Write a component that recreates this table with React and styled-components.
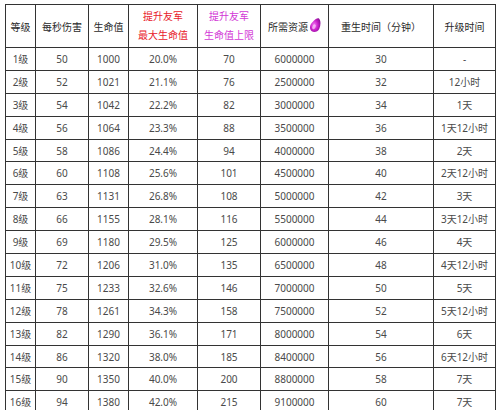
import React from "react";
import styled, { createGlobalStyle } from "styled-components";

const rows = [
  ["1级", 50, 1000, "20.0%", 70, 6000000, 30, "-"],
  ["2级", 52, 1021, "21.1%", 76, 2500000, 32, "12小时"],
  ["3级", 54, 1042, "22.2%", 82, 3000000, 34, "1天"],
  ["4级", 56, 1064, "23.3%", 88, 3500000, 36, "1天12小时"],
  ["5级", 58, 1086, "24.4%", 94, 4000000, 38, "2天"],
  ["6级", 60, 1108, "25.6%", 101, 4500000, 40, "2天12小时"],
  ["7级", 63, 1131, "26.8%", 108, 5000000, 42, "3天"],
  ["8级", 66, 1155, "28.1%", 116, 5500000, 44, "3天12小时"],
  ["9级", 69, 1180, "29.5%", 125, 6000000, 46, "4天"],
  ["10级", 72, 1206, "31.0%", 135, 6500000, 48, "4天12小时"],
  ["11级", 75, 1233, "32.6%", 146, 7000000, 50, "5天"],
  ["12级", 78, 1261, "34.3%", 158, 7500000, 52, "5天12小时"],
  ["13级", 82, 1290, "36.1%", 171, 8000000, 54, "6天"],
  ["14级", 86, 1320, "38.0%", 185, 8400000, 56, "6天12小时"],
  ["15级", 90, 1350, "40.0%", 200, 8800000, 58, "7天"],
  ["16级", 94, 1380, "42.0%", 215, 9100000, 60, "7天"],
];

const widths = [30, 53, 40, 69, 63, 68, 105, 62];

function Gem() {
  return (
    <svg width="12" height="15" viewBox="0 0 12 15" style={{ verticalAlign: "-2px", marginLeft: 1 }}>
      <defs>
        <radialGradient id="gemfill" cx="0.4" cy="0.5" r="0.7">
          <stop offset="0" stopColor="#f27af2" />
          <stop offset="0.5" stopColor="#cc22cc" />
          <stop offset="1" stopColor="#7c0c8c" />
        </radialGradient>
      </defs>
      <path
        d="M10 0.6 C11.9 2.6 11.9 7.2 10.3 10.7 C8.9 13.7 5.2 14.8 2.8 13.2 C0.4 11.6 0.5 8 2.5 5.3 C4.6 2.6 8.2 -1.2 10 0.6 Z"
        fill="url(#gemfill)"
      />
      <ellipse cx="5" cy="8.8" rx="1.6" ry="2.6" fill="#fbd0fb" opacity="0.7" transform="rotate(25 5 8.8)" />
    </svg>
  );
}

export default function App() {
  return (
    <>
      <GlobalStyle />
      <Page>
        <Table>
          <colgroup>
            {widths.map((w, i) => (
              <col key={i} style={{ width: w }} />
            ))}
          </colgroup>
          <thead>
            <tr>
              <Head>等级</Head>
              <Head>每秒伤害</Head>
              <Head>生命值</Head>
              <Head $tone="red">
                <HeadLine>提升友军</HeadLine>
                <HeadLine>最大生命值</HeadLine>
              </Head>
              <Head $tone="pink">
                <HeadLine>提升友军</HeadLine>
                <HeadLine>生命值上限</HeadLine>
              </Head>
              <Head>
                所需资源
                <Gem />
              </Head>
              <Head>重生时间（分钟）</Head>
              <Head>升级时间</Head>
            </tr>
          </thead>
          <tbody>
            {rows.map((r) => (
              <tr key={r[0]}>
                {r.map((v, i) => (
                  <Cell key={i}>{v}</Cell>
                ))}
              </tr>
            ))}
          </tbody>
        </Table>
      </Page>
    </>
  );
}

const GlobalStyle = createGlobalStyle`
  body {
    margin: 0;
    background: #fff;
    font-family: "Noto Sans", "Noto Sans CJK SC", sans-serif;
  }
`;

const Page = styled.div`
  width: 500px;
  height: 410px;
  overflow: hidden;
  padding: 4px 0 0 5px;
  box-sizing: border-box;
`;

const Table = styled.table`
  border-collapse: collapse;
  table-layout: fixed;
  width: 490px;
  font-size: 10px;
  color: #4a4a4a;
`;

const Head = styled.th`
  height: 42px;
  padding: 0;
  border: 1px solid #333;
  font-weight: normal;
  text-align: center;
  vertical-align: middle;
  white-space: nowrap;
  color: ${(p) => (p.$tone === "red" ? "#e8202a" : p.$tone === "pink" ? "#d238d6" : "#2a2a2a")};
`;

const HeadLine = styled.div`
  line-height: 19px;
`;

const Cell = styled.td`
  height: 21.9px;
  padding: 0;
  border: 1px solid #333;
  text-align: center;
  vertical-align: middle;
  white-space: nowrap;
  line-height: 12px;
`;
